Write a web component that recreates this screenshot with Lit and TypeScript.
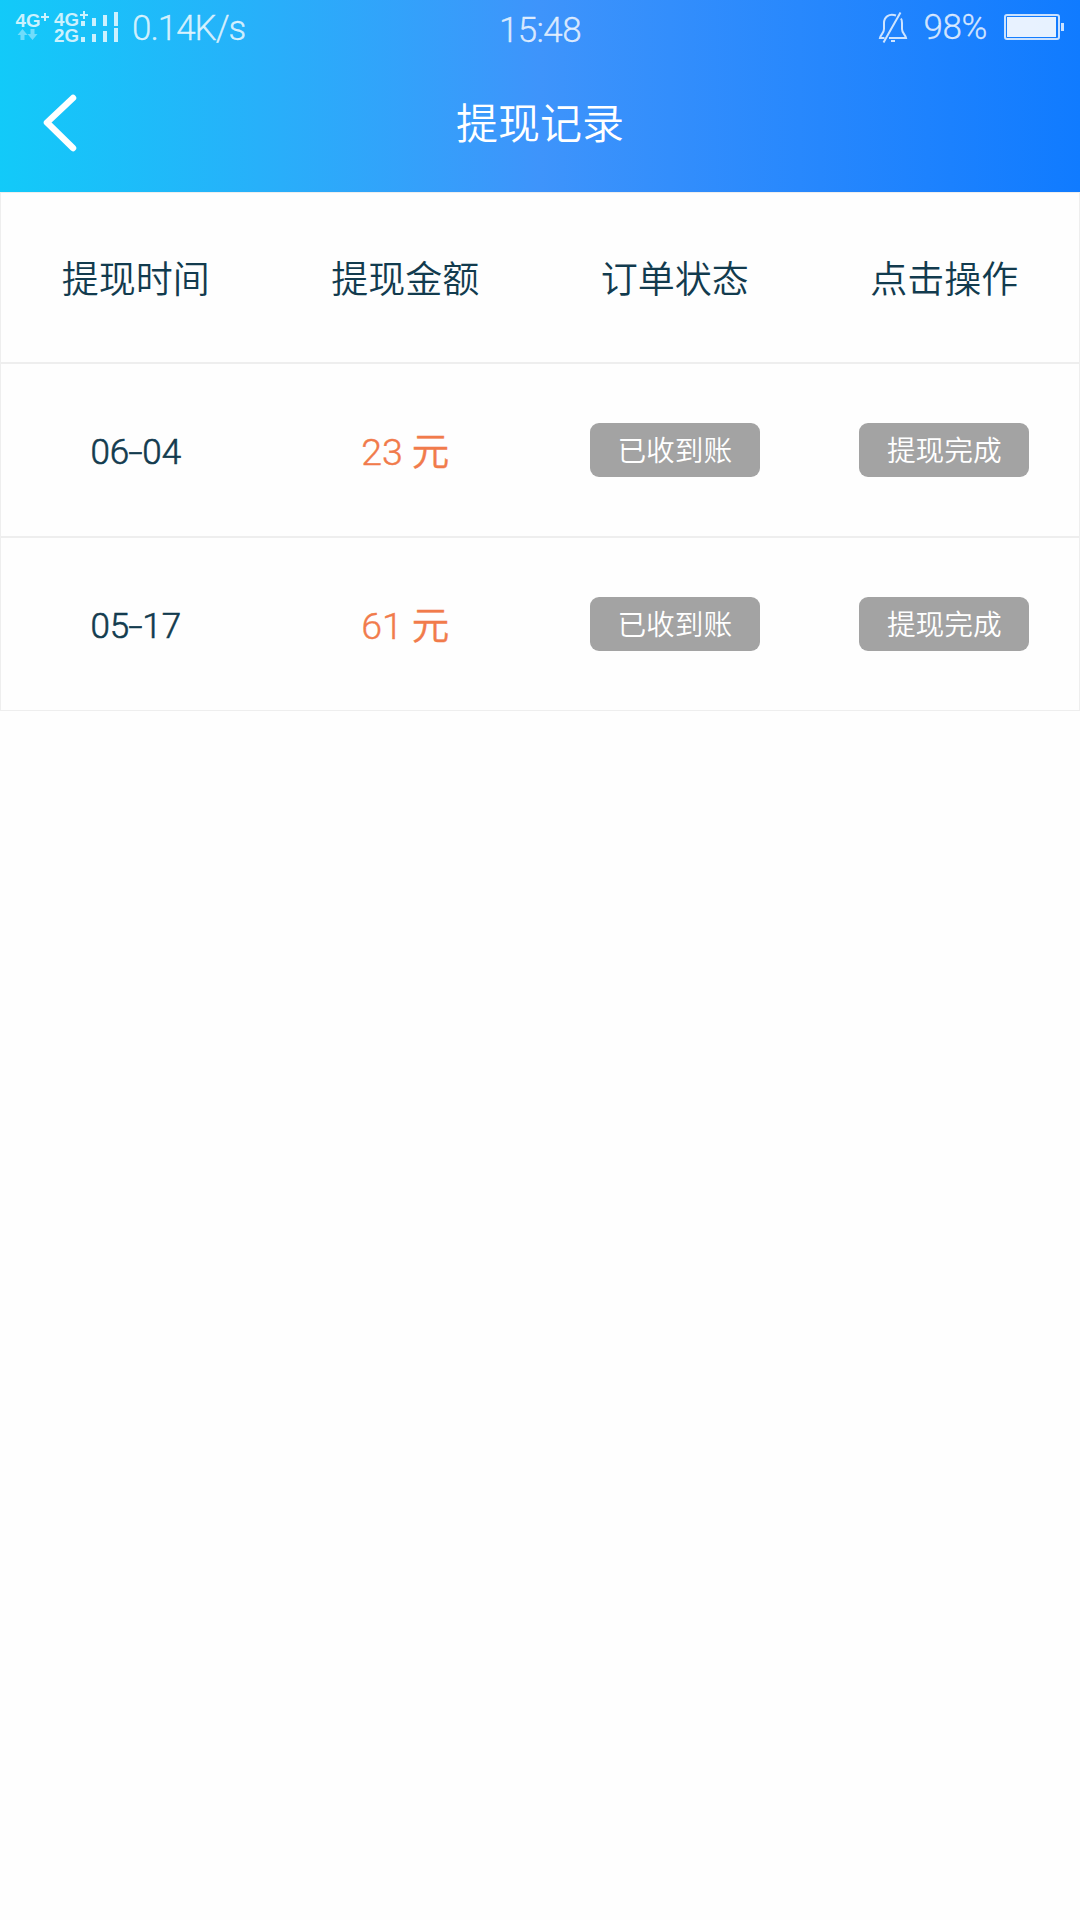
import { LitElement, html, css } from "lit";
import { customElement } from "lit/decorators.js";

interface WithdrawalRecord {
  month: string;
  day: string;
  amount: number;
  status: string;
  action: string;
}

const COLUMNS = ["提现时间", "提现金额", "订单状态", "点击操作"];

const RECORDS: WithdrawalRecord[] = [
  { month: "06", day: "04", amount: 23, status: "已收到账", action: "提现完成" },
  { month: "05", day: "17", amount: 61, status: "已收到账", action: "提现完成" },
];

@customElement("status-bar")
class StatusBar extends LitElement {
  static styles = css`
    :host {
      display: block;
      color: rgba(255, 255, 255, 0.78);
      font-family: Roboto, sans-serif;
      font-size: 35px;
      font-weight: 300;
    }
    .bar {
      display: grid;
      grid-template-columns: 1fr auto 1fr;
      align-items: start;
      height: 57px;
      line-height: 57px;
    }
    .side {
      display: flex;
      align-items: center;
      height: 57px;
    }
    .right {
      justify-content: flex-end;
    }
    svg {
      display: block;
      flex: none;
    }
    .signal-text {
      font: 700 19px "Liberation Sans", Arial, sans-serif;
    }
    .speed,
    .clock,
    .percent {
      -webkit-text-stroke: 0.3px currentColor;
    }
    .speed {
      margin-left: 12px;
      letter-spacing: -1px;
    }
    .clock {
      letter-spacing: -0.6px;
      padding-top: 2px;
    }
    .percent {
      margin: 0 17px 0 15px;
      letter-spacing: -0.4px;
      padding-bottom: 2px;
    }
  `;

  render() {
    return html`
      <div class="bar">
        <div class="side">
          <svg width="120" height="57" viewBox="0 0 120 57" fill="currentColor">
            <text class="signal-text" x="15.5" y="27" textLength="25" lengthAdjust="spacingAndGlyphs">4G</text>
            <path d="M44 13h2v3h3v2h-3v3h-2v-3h-3v-2h3z" />
            <path opacity=".5" d="M22.500 29l5 6h-3v5h-4v-5h-3zM32.500 40l-5-6h3v-5h4v5h3z" />
            <text class="signal-text" x="54" y="26" textLength="25" lengthAdjust="spacingAndGlyphs">4G</text>
            <path d="M83 11h2v3h3v2h-3v3h-2v-3h-3v-2h3z" />
            <text class="signal-text" x="54" y="42" textLength="25" lengthAdjust="spacingAndGlyphs">2G</text>
            <path
              d="M81 21h4v5h-4zM92 18h4v8h-4zM103 15h4v11h-4zM114 12h4v14h-4zM81 37h4v5h-4zM92 34h4v8h-4zM103 31h4v11h-4zM114 28h4v14h-4z"
            />
          </svg>
          <span class="speed">0.14K/s</span>
        </div>
        <span class="clock">15:48</span>
        <div class="side right">
          <svg width="30" height="57" viewBox="0 0 30 57" fill="none" stroke="currentColor" stroke-width="2">
            <path d="M18 15.500C11 13 6 17 6 23V29C6 33 3 34 2 38H6.500M23 18.500C24 20 24 21 24 23V29C24 33 27 34 28 38H11" />
            <path d="M22.500 12.500L5.500 42.500M13 41H17" />
          </svg>
          <span class="percent">98%</span>
          <svg width="76" height="57" viewBox="0 0 76 57">
            <rect x="1" y="15" width="54" height="24" rx="2" fill="none" stroke="currentColor" stroke-width="2" />
            <rect x="3" y="17" width="49" height="20" fill="#fff" fill-opacity=".9" />
            <rect x="57" y="23" width="3" height="8" fill="currentColor" />
          </svg>
        </div>
      </div>
    `;
  }
}

@customElement("record-table")
class RecordTable extends LitElement {
  static styles = css`
    :host {
      display: block;
    }
    .table {
      border: 1px solid #eee;
    }
    .row {
      display: grid;
      grid-template-columns: repeat(4, 1fr);
      place-items: center;
      height: 172px;
      color: #123b4e;
      font-size: 35px;
    }
    .row + .row {
      border-top: 2px solid #eee;
    }
    .head {
      height: 169px;
      font-size: 37px;
    }
    .head span {
      padding-bottom: 1px;
    }
    .date {
      font-family: Roboto, sans-serif;
      font-weight: 300;
      -webkit-text-stroke: 0.6px currentColor;
      padding-top: 5px;
    }
    .dash {
      display: inline-block;
      width: 13px;
      text-align: center;
      transform: scaleX(1.45);
    }
    .amount {
      color: #f17b4b;
      font-family: Roboto, "Noto Sans CJK SC", sans-serif;
      font-size: 37.500px;
      -webkit-text-stroke: 0.4px currentColor;
      padding-bottom: 3px;
    }
    .tag {
      display: flex;
      align-items: center;
      justify-content: center;
      box-sizing: border-box;
      width: 170px;
      height: 54px;
      padding-bottom: 3px;
      border-radius: 9px;
      background: #a3a3a3;
      color: #fff;
      font-size: 28.700px;
    }
  `;

  render() {
    return html`
      <div class="table">
        <div class="row head">${COLUMNS.map((name) => html`<span>${name}</span>`)}</div>
        ${RECORDS.map(
          (record) => html`
            <div class="row">
              <span class="date">${record.month}<span class="dash">-</span>${record.day}</span>
              <span class="amount">${record.amount} 元</span>
              <span class="tag">${record.status}</span>
              <span class="tag">${record.action}</span>
            </div>
          `
        )}
      </div>
    `;
  }
}

@customElement("app-root")
class AppRoot extends LitElement {
  static styles = css`
    :host {
      display: block;
      min-height: 1920px;
      background: #fefefe;
      font-family: "Noto Sans CJK SC", sans-serif;
      font-weight: 350;
    }
    .top {
      height: 192px;
      background: linear-gradient(90deg, #12caf9 0%, #3e94fb 50%, #107bff 100%);
    }
    .nav {
      display: grid;
      grid-template-columns: 120px 1fr 120px;
      align-items: center;
      height: 132px;
      color: #fff;
    }
    .title {
      margin: 0;
      padding-bottom: 5px;
      text-align: center;
      font-size: 42px;
      font-weight: inherit;
    }
    .back {
      display: block;
    }
  `;

  render() {
    return html`
      <header class="top">
        <status-bar></status-bar>
        <nav class="nav">
          <svg class="back" width="120" height="132" viewBox="0 0 120 132" aria-label="返回">
            <path
              d="M73 41L47 65.500L73 91"
              fill="none"
              stroke="#fff"
              stroke-width="6.500"
              stroke-linecap="round"
              stroke-linejoin="round"
            />
          </svg>
          <h1 class="title">提现记录</h1>
        </nav>
      </header>
      <record-table></record-table>
    `;
  }
}
